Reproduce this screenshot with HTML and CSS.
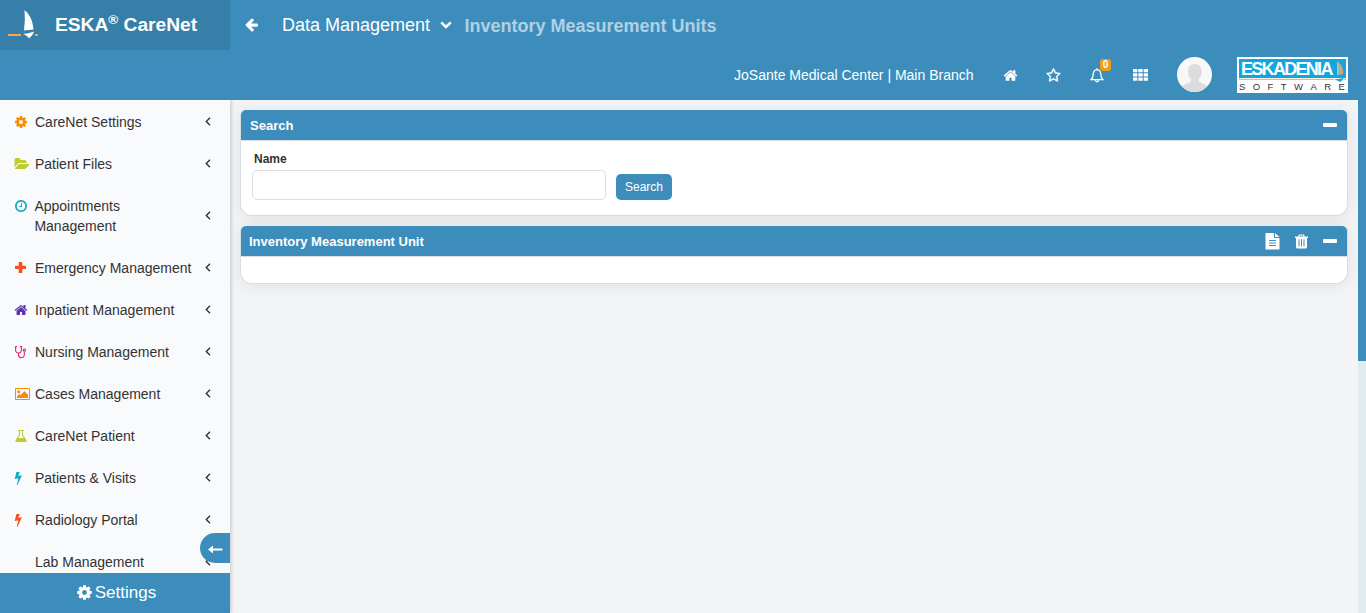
FILE: index.html
```html
<!DOCTYPE html>
<html lang="en">
<head>
<meta charset="utf-8">
<title>ESKA CareNet - Inventory Measurement Units</title>
<link rel="stylesheet" href="styles.css">
</head>
<body>
<svg class="sprite" aria-hidden="true">
  <symbol id="home" viewBox="0 0 1792 1792"><path d="M1472 992v480q0 26-19 45t-45 19h-384v-384h-256v384h-384q-26 0-45-19t-19-45v-480q0-1 .5-3t.5-3l575-474 575 474q1 2 1 6zm223-69l-62 74q-8 9-21 11h-3q-13 0-21-7l-692-577-692 577q-12 8-24 7-13-2-21-11l-62-74q-8-10-7-23.5t11-21.5l719-599q32-26 76-26t76 26l244 204v-195q0-14 9-23t23-9h192q14 0 23 9t9 23v408l219 182q10 8 11 21.5t-7 23.5z"/></symbol>
  <symbol id="cog" viewBox="0 0 1792 1792"><path d="M1152 896q0-106-75-181t-181-75-181 75-75 181 75 181 181 75 181-75 75-181zm512-109v222q0 12-8 23t-20 13l-185 28q-19 54-39 91 35 50 107 138 10 12 10 25t-9 23q-27 37-99 108t-94 71q-12 0-26-9l-138-108q-44 23-91 38-16 136-29 186-7 28-36 28h-222q-14 0-24.5-8.5t-11.5-21.5l-28-184q-49-16-90-37l-141 107q-10 9-25 9-14 0-25-11-126-114-165-168-7-10-7-23 0-12 8-23 15-21 51-66.5t54-70.5q-27-50-41-99l-183-27q-13-2-21-12.5t-8-23.5v-222q0-12 8-23t19-13l186-28q14-46 39-92-40-57-107-138-10-12-10-24 0-10 9-23 26-36 98.5-107.5t94.5-71.5q13 0 26 10l138 107q44-23 91-38 16-136 29-186 7-28 36-28h222q14 0 24.5 8.5t11.5 21.5l28 184q49 16 90 37l142-107q9-9 24-9 13 0 25 10 129 119 165 170 7 8 7 22 0 12-8 23-15 21-51 66.5t-54 70.5q26 50 41 98l183 28q13 2 21 12.5t8 23.5z"/></symbol>
  <symbol id="folder" viewBox="-64 0 1920 1792"><path d="M1815 952q0 31-31 66l-336 396q-43 51-120.5 86.5t-143.5 35.5h-1088q-34 0-60.5-13t-26.5-43q0-31 31-66l336-396q43-51 120.5-86.5t143.5-35.5h1088q34 0 60.5 13t26.5 43zm-343-344v160h-832q-94 0-197 47.5t-164 119.5l-337 396-5 6q0-4-.5-12.5t-.5-12.5v-960q0-92 66-158t158-66h320q92 0 158 66t66 158v32h544q92 0 158 66t66 158z"/></symbol>
  <symbol id="clock" viewBox="0 0 1792 1792"><path d="M1024 544v448q0 14-9 23t-23 9h-320q-14 0-23-9t-9-23v-64q0-14 9-23t23-9h224v-352q0-14 9-23t23-9h64q14 0 23 9t9 23zm416 352q0-148-73-273t-198-198-273-73-273 73-198 198-73 273 73 273 198 198 273 73 273-73 198-198 73-273zm224 0q0 209-103 385.5t-279.5 279.5-385.5 103-385.5-103-279.5-279.5-103-385.5 103-385.5 279.5-279.5 385.5-103 385.5 103 279.5 279.5 103 385.5z"/></symbol>
  <symbol id="plus" viewBox="0 0 14 14"><path d="M5.300 1h2.400q.6 0 .6.600v3.100h3.100q.6 0 .6.600v2.200q0 .6-.6.600H8.300v3.300q0 .6-.6.600H5.300q-.6 0-.6-.6V8.100H1.600q-.6 0-.6-.6V5.300q0-.6.600-.6h3.100V1.600q0-.6.600-.6z"/></symbol>
  <symbol id="steth" viewBox="0 0 14 14"><g fill="none" stroke="currentColor" stroke-width="1.050"><path d="M3 1.600H1.600v3.200c0 2.300 1.200 3.200 2.900 3.200s2.900-.9 2.900-3.200V1.600H6M4.500 8v1.800c0 3.800 5.800 3.800 5.800 0V6.400"/><circle cx="10.400" cy="5.200" r="1.100"/></g></symbol>
  <symbol id="image" viewBox="0 0 15 14"><path fill-rule="evenodd" d="M1 1h13q1 0 1 1v10q0 1-1 1H1q-1 0-1-1V2q0-1 1-1zm.200 1q-.2 0-.2.200v9.600q0 .2.200.2h12.600q.2 0 .2-.2V2.200q0-.2-.2-.2z"/><circle cx="3.700" cy="4.700" r="1.500"/><path d="M2 11V9.200l2.300-2.300 1.300 1.200L9.500 4.200 13 7.700V11z"/></symbol>
  <symbol id="flask" viewBox="0 0 14 14"><path fill-rule="evenodd" d="M4.500 1h5q.5 0 .5.500t-.5.500H9v3.800l3.400 5.500q.8 1.700-.9 1.700h-9q-1.700 0-.9-1.700L5 5.800V2h-.5Q4 2 4 1.500T4.500 1zM6 2v4.200L4.100 9h5.800L8 6.200V2z"/></symbol>
  <symbol id="bolt" viewBox="350 0 1792 1792"><path d="M1333 566q18 20 7 44l-540 1157q-13 25-42 25-4 0-14-2-17-5-25.500-19t-4.500-30l197-808-406 101q-4 1-12 1-18 0-31-11-18-15-13-39l201-825q4-14 16-23t28-9h328q19 0 32 12.500t13 29.500q0 8-5 18l-171 463 396-98q8-2 12-2 19 0 34 15z"/></symbol>
  <symbol id="star" viewBox="0 0 1792 1792"><path stroke="currentColor" stroke-width="50" d="M1201 1004l306-297-422-62-189-382-189 382-422 62 306 297-73 421 378-199 377 199zm527-357q0 22-26 48l-363 354 86 500q1 7 1 20 0 50-41 50-19 0-40-12l-449-236-449 236q-22 12-40 12-21 0-31.500-14.500t-10.500-35.500q0-6 2-20l86-500-364-354q-25-27-25-48 0-37 56-46l502-73 225-455q19-41 49-41t49 41l225 455 502 73q56 9 56 46z"/></symbol>
  <symbol id="arrow" viewBox="0 0 1792 1792"><path d="M1664 896v128q0 53-32.500 90.500t-84.500 37.500h-704l293 294q38 36 38 90t-38 90l-75 76q-37 37-90 37-52 0-91-37l-651-652q-37-37-37-90 0-52 37-91l651-650q38-38 91-38 52 0 90 38l75 74q38 38 38 91t-38 91l-293 293h704q52 0 84.500 37.500t32.500 90.500z"/></symbol>
  <symbol id="angle" viewBox="0 0 6 9"><path d="M5 .8 1.300 4.500 5 8.200" fill="none" stroke="currentColor" stroke-width="1.400"/></symbol>
</svg>

<header class="header">
  <div class="header-row">
    <a class="brand">
      <svg class="brand-logo" viewBox="0 0 32 32"><path fill="#fff" d="M16.500 1c5 4 8.500 11 9 19.500l-9.500 1q1.500-10 .5-20.500zM15 25q5-.5 11-2.500-.5 3-5 7-1-2.500-6-4.500z"/><path fill="#f9a54a" d="M0 25h13v2H0zM27 25h3v2h-3z"/></svg>
      <span class="brand-name">ESKA<sup>®</sup> CareNet</span>
    </a>
    <nav class="crumbs">
      <svg class="back"><use href="#arrow"/></svg>
      <span class="crumb">Data Management</span>
      <svg class="chev" viewBox="0 0 12 8"><path d="M1.200 1.400 6 6l4.800-4.600" fill="none" stroke="#fff" stroke-width="2.500"/></svg>
      <span class="crumb-current">Inventory Measurement Units</span>
    </nav>
  </div>
  <div class="header-row tools">
    <span class="branch">JoSante Medical Center | Main Branch</span>
    <svg class="tool"><use href="#home"/></svg>
    <svg class="tool star"><use href="#star"/></svg>
    <span class="bell">
      <svg viewBox="0 0 14 15"><path d="M7 1.700C4 1.900 3.300 4.200 3.200 6.500 3.100 9 2.200 10.500 1 11.700h12C11.800 10.500 10.900 9 10.800 6.500 10.700 4.200 10 1.900 7 1.700zM7 .3v1.400M5.400 12q.2 1.700 1.600 1.800 1.400-.1 1.600-1.800" fill="none" stroke="#fff" stroke-width="1.300"/></svg>
      <b class="badge">0</b>
    </span>
    <svg class="apps" viewBox="0 0 15 12"><path d="M0 0h4.300v3.200H0zM5.300 0h4.400v3.200H5.300zM10.700 0H15v3.200h-4.300zM0 4.200h4.300v3.300H0zM5.300 4.200h4.400v3.300H5.300zM10.700 4.200H15v3.300h-4.300zM0 8.500h4.300v3.200H0zM5.300 8.500h4.400v3.200H5.300zM10.700 8.500H15v3.200h-4.300z"/></svg>
    <svg class="avatar" viewBox="0 0 35 35"><defs><clipPath id="disc"><circle cx="17.500" cy="17.500" r="17.500"/></clipPath></defs><circle cx="17.500" cy="17.500" r="17.500" fill="#f8f8f8"/><path clip-path="url(#disc)" fill="#dcdcdc" d="M17.700 7c5 0 7.400 3.500 7 8.300-.3 3.500-1.500 5.500-3 7 0 3 1 3.200 4 4.200 3 1 5 2 6 4.500V35H4v-4c1-2.500 3-3.500 6-4.500s4-1.200 4-4.200c-1.600-1.500-2.700-3.500-3-7-.4-4.800 2-8.300 6.700-8.300z"/></svg>
    <div class="company">
      <div class="company-top"><span>ESKADENIA</span><svg viewBox="0 0 9 17"><path fill="#dba36c" d="M1 1q7 5 6 13l-5 1Q4 9 1 1z"/><path fill="#fff" d="M1 1q3 8 1 14l-1 .2z" opacity=".5"/></svg></div>
      <svg class="company-line" viewBox="0 0 107 4"><path fill="#f6b56a" d="M0 .8h95v1.200H0zM105 .8h2v1.200h-2z"/><path fill="#12a5de" d="M95 1.500 105 0q-1 2.500-4 4-2-2-6-2.500z"/></svg>
      <div class="company-bottom"><span>S</span><span>O</span><span>F</span><span>T</span><span>W</span><span>A</span><span>R</span><span>E</span></div>
    </div>
  </div>
</header>

<div class="body">
  <aside class="sidebar">
    <ul class="menu">
      <li><svg class="ico orange"><use href="#cog"/></svg><span>CareNet Settings</span><svg class="angle"><use href="#angle"/></svg></li>
      <li><svg class="ico wide lime"><use href="#folder"/></svg><span>Patient Files</span><svg class="angle"><use href="#angle"/></svg></li>
      <li class="tall"><svg class="ico cyan"><use href="#clock"/></svg><span>Appointments Management</span><svg class="angle"><use href="#angle"/></svg></li>
      <li><svg class="ico red"><use href="#plus"/></svg><span>Emergency Management</span><svg class="angle"><use href="#angle"/></svg></li>
      <li><svg class="ico purple"><use href="#home"/></svg><span>Inpatient Management</span><svg class="angle"><use href="#angle"/></svg></li>
      <li><svg class="ico pink"><use href="#steth"/></svg><span>Nursing Management</span><svg class="angle"><use href="#angle"/></svg></li>
      <li><svg class="ico wide orange image"><use href="#image"/></svg><span>Cases Management</span><svg class="angle"><use href="#angle"/></svg></li>
      <li><svg class="ico lime"><use href="#flask"/></svg><span>CareNet Patient</span><svg class="angle"><use href="#angle"/></svg></li>
      <li><svg class="ico cyan"><use href="#bolt"/></svg><span>Patients &amp; Visits</span><svg class="angle"><use href="#angle"/></svg></li>
      <li><svg class="ico red"><use href="#bolt"/></svg><span>Radiology Portal</span><svg class="angle"><use href="#angle"/></svg></li>
      <li><i class="ico"></i><span>Lab Management</span><svg class="angle"><use href="#angle"/></svg></li>
    </ul>
    <button class="collapse"><svg viewBox="0 0 15 9"><path d="M0 4.500 5 .5v3h9.500v2H5v3z"/></svg></button>
    <div class="settings"><svg><use href="#cog"/></svg><span>Settings</span></div>
  </aside>
  <main class="content">
    <section class="panel">
      <div class="panel-head search-head"><h2>Search</h2><i class="minus"></i></div>
      <form class="search">
        <div class="field"><label for="name">Name</label><input id="name" type="text"></div>
        <button type="button" class="btn">Search</button>
      </form>
    </section>
    <section class="panel">
      <div class="panel-head"><h2>Inventory Measurement Unit</h2>
        <svg class="doc" viewBox="0 0 15 17"><path fill="#fff" d="M.5 0H9v5h5.500v11.500H.5zM10 0l4.500 4H10z"/><path d="M4 7.500h7M4 10h7M4 12.500h7" stroke="#3c8dbc"/></svg>
        <svg class="trash" viewBox="0 0 13 15"><path fill="#fff" fill-rule="evenodd" d="M4 .5h5l.8 2H13V4h-1v9q0 1.500-1.500 1.500h-8Q1 14.500 1 13V4H0V2.500h3.200zM4.800 1.500l-.4 1h4.200l-.4-1z"/><path d="M4 5.300v7M6.500 5.300v7M9 5.300v7" stroke="#3c8dbc"/></svg>
        <i class="minus"></i></div>
      <div class="empty"></div>
    </section>
  </main>
  <div class="scroll"><div class="thumb"></div></div>
</div>
</body>
</html>
```
FILE: styles.css
```css
* { box-sizing: border-box; }
body { margin: 0; height: 613px; overflow: hidden; display: flex; flex-direction: column; font-family: "Liberation Sans", Arial, sans-serif; font-size: 14px; color: #333; background: #f3f4f6; }
svg { display: block; flex: none; fill: currentColor; }
.sprite { position: absolute; width: 0; height: 0; }

.header { flex: none; height: 100px; background: #3c8dbc; color: #fff; }
.header-row { display: flex; align-items: center; height: 50px; }
.brand { display: flex; align-items: center; width: 230px; height: 50px; padding-left: 8px; background: #367fa9; }
.brand-logo { width: 32px; height: 32px; margin-top: -1px; }
.brand-name { margin-left: 15px; font-size: 19.2px; font-weight: bold; line-height: 20px; white-space: nowrap; }
.brand-name sup { font-size: 13.500px; font-weight: bold; line-height: 0; position: relative; vertical-align: baseline; top: -7px; }
.crumbs { display: flex; align-items: center; padding-left: 14px; }
.back { width: 15px; height: 15px; margin-top: -1px; }
.crumb { margin-left: 23px; font-size: 18px; }
.chev { width: 12px; height: 8px; margin-left: 10px; }
.crumb-current { margin: 2px 0 0 12.4px; font-size: 18px; font-weight: bold; color: #b1d1e4; }

.tools { padding-right: 18px; justify-content: flex-end; }
.branch { margin-right: 29.500px; font-size: 14px; }
.tool { width: 15px; height: 15px; }
.star { margin-left: 28px; }
.bell { position: relative; width: 14px; height: 15px; margin-left: 29px; }
.bell svg { width: 14px; height: 15px; }
.badge { position: absolute; left: 10px; top: -9px; width: 11px; height: 12px; border-radius: 3px; background: #f39c12; font-size: 10px; line-height: 12px; text-align: center; }
.apps { width: 15px; height: 12px; margin-left: 29px; }
.avatar { width: 35px; height: 35px; margin-left: 29px; margin-top: -1px; }
.company { width: 111px; height: 36px; margin-left: 25px; padding: 2px; background: #fff; }
.company-top { display: flex; align-items: center; height: 19px; background: #12a5de; }
.company-top span { width: 97px; padding: 1px 0 0 2px; font-size: 18px; line-height: 19px; font-weight: bold; letter-spacing: -1.700px; white-space: nowrap; }
.company-top svg { width: 9px; height: 17px; }
.company-line { width: 107px; height: 4px; }
.company-bottom { display: flex; justify-content: space-between; padding: 0 1px 0 0; font-size: 9.500px; line-height: 9px; color: #333; }

.body { flex: 1; display: flex; min-height: 0; }
.sidebar { position: relative; display: flex; flex-direction: column; width: 230px; background: #f9fafc; box-shadow: 1px 0 4px rgba(0, 0, 0, .2); clip-path: inset(0 -8px 0 0); }
.menu { flex: 1; min-height: 0; overflow: hidden; list-style: none; margin: 0; padding: 1px 0 0; }
.menu li { display: flex; align-items: center; height: 42px; padding: 0 19px 0 14px; line-height: 20px; font-size: 14px; }
.menu li.tall { height: 62px; }
.menu span { flex: 1; margin-left: 7px; white-space: nowrap; }
.menu .wide + span { margin-left: 5px; }
.menu .tall span { margin-left: 6.4px; white-space: normal; padding-right: 40px; }
.ico { width: 14px; height: 14px; }
.wide { width: 16px; }
.image { width: 15px; margin-left: 1px; }
.tall .ico { margin-bottom: 20px; }
.angle { width: 6px; height: 9px; margin-top: -1px; }
.orange { color: #fb8c00; }
.lime { color: #c0ca33; }
.cyan { color: #12a9c4; }
.red { color: #f4511e; }
.purple { color: #5e35b1; }
.pink { color: #e01e6a; }
.collapse { position: absolute; right: 0; bottom: 50px; width: 30px; height: 30px; padding: 2px 0 0 8px; border: 0; border-radius: 15px 0 0 15px; background: #3c8dbc; color: #fff; }
.collapse svg { width: 15px; height: 9px; }
.settings { display: flex; align-items: center; justify-content: center; height: 40px; padding: 0 0 1px 2px; background: #3c8dbc; color: #fff; font-size: 17px; gap: 2px; }
.settings svg { width: 17px; height: 17px; margin-top: -1px; }

.content { flex: 1; display: flex; flex-direction: column; gap: 10px; padding: 10px 10px 0; }
.panel { border: 1px solid #d6dee3; border-top: 0; border-radius: 5px 5px 12px 12px; background: #fff; box-shadow: 0 2px 18px rgba(0, 0, 0, .08); }
.panel-head { display: flex; align-items: center; height: 30px; padding: 0 10px 0 8px; border-radius: 5px 5px 0 0; background: #3c8dbc; color: #fff; box-shadow: 0 1px #d9dee2; }
.search-head { padding-left: 9px; }
.panel-head h2 { flex: 1; margin: 0; padding-top: 2px; font-size: 13px; line-height: 16px; }
.minus { width: 14px; height: 4px; border-radius: 1px; background: #fff; }
.doc { width: 15px; height: 17px; margin-right: 15px; }
.trash { width: 13px; height: 15px; margin-right: 15px; }
.search { display: flex; align-items: flex-end; height: 75px; padding: 11px 11px 15px; gap: 10px; }
.field { width: 354px; }
.field label { display: block; padding-left: 2px; font-size: 12px; line-height: 15px; font-weight: bold; margin-bottom: 3px; }
.field input { display: block; width: 100%; height: 30px; border: 1px solid #ddd; border-radius: 5px; background: #fff; }
.btn { width: 56px; height: 26px; padding: 0; border: 0; border-radius: 5px; background: #3c8dbc; color: #fff; font: 12px "Liberation Sans", Arial, sans-serif; }
.empty { height: 27px; }
.scroll { width: 8px; background: #e0ebef; }
.thumb { height: 261px; background: #3c8dbc; }
```
